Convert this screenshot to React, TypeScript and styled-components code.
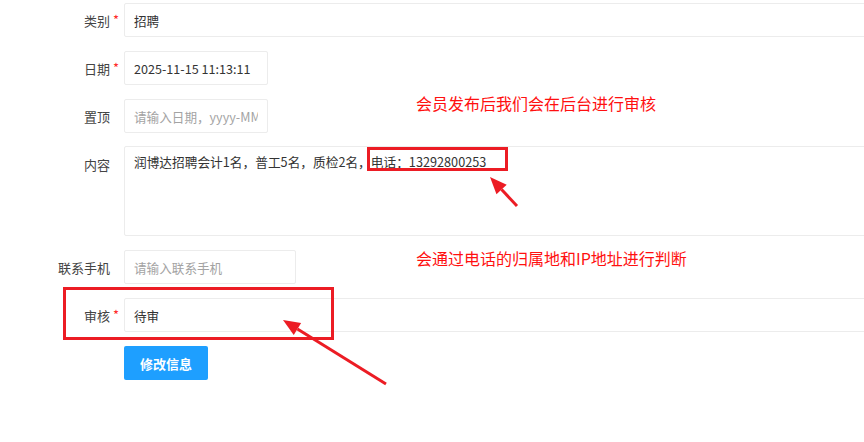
import React from "react";
import styled, { createGlobalStyle } from "styled-components";

const GlobalStyle = createGlobalStyle`
    html, body {
        margin: 0;
        padding: 0;
        background: #fff;
        overflow: hidden;
    }
    body {
        font-family: "Noto Sans CJK SC", "Noto Sans", "Liberation Sans", sans-serif;
        font-size: 13px;
        color: #333;
    }
`;

const Page = styled.div`
    position: relative;
    width: 864px;
    height: 442px;
    overflow: hidden;
`;

const Form = styled.form`
    display: flex;
    flex-direction: column;
    gap: 14px;
    padding-top: 3px;
`;

const Row = styled.div<{ $top?: boolean }>`
    display: flex;
    align-items: ${(p) => (p.$top ? "flex-start" : "center")};
`;

const LabelCell = styled.label`
    display: flex;
    width: 124px;
    flex-shrink: 0;
    height: 34px;
    align-items: center;
`;

const LabelText = styled.span`
    flex: 1;
    text-align: right;
    color: #444;
    font-size: 13px;
`;

const Star = styled.span`
    width: 14px;
    padding-left: 3px;
    box-sizing: border-box;
    align-self: flex-start;
    margin-top: 10px;
    color: #ff2a2a;
    font-size: 13px;
    line-height: 1;
`;

const Input = styled.input<{ $width: number }>`
    box-sizing: border-box;
    width: ${(p) => p.$width}px;
    height: 34px;
    flex-shrink: 0;
    padding: 0 9px;
    border: 1px solid #ececec;
    border-radius: 2px;
    outline: none;
    font-family: inherit;
    font-size: 12.6px;
    color: #333;
    background: #fff;
    &::placeholder {
        color: #a3a3a3;
    }
`;

const TextArea = styled.textarea`
    box-sizing: border-box;
    width: 760px;
    height: 90px;
    flex-shrink: 0;
    margin-top: -1px;
    padding: 5px 9px;
    border: 1px solid #ececec;
    border-radius: 2px;
    outline: none;
    resize: none;
    font-family: inherit;
    font-size: 12.7px;
    line-height: 20px;
    color: #333;
`;

const ButtonRow = styled.div`
    padding-left: 124px;
`;

const SubmitButton = styled.button`
    width: 84px;
    height: 34px;
    border: none;
    border-radius: 2px;
    background: #1e9fff;
    color: #fff;
    font-family: inherit;
    font-size: 13px;
    font-weight: 700;
    cursor: pointer;
`;

const Note = styled.div<{ $x: number; $y: number }>`
    position: absolute;
    left: ${(p) => p.$x}px;
    top: ${(p) => p.$y}px;
    color: #ff1010;
    font-size: 16px;
    line-height: 20px;
    white-space: nowrap;
`;

const Overlay = styled.svg`
    position: absolute;
    left: 0;
    top: 0;
    pointer-events: none;
`;

const RED = "#ec1c24";

function Arrow({ x1, y1, x2, y2 }: { x1: number; y1: number; x2: number; y2: number }) {
    const a = Math.atan2(y2 - y1, x2 - x1);
    const len = 17;
    const w = 7;
    const bx = x2 - Math.cos(a) * len;
    const by = y2 - Math.sin(a) * len;
    const px = -Math.sin(a) * w;
    const py = Math.cos(a) * w;
    return (
        <g>
            <line x1={x1} y1={y1} x2={bx} y2={by} stroke={RED} strokeWidth={3} />
            <polygon
                points={`${x2},${y2} ${bx + px},${by + py} ${bx - px},${by - py}`}
                fill={RED}
            />
        </g>
    );
}

export default function App() {
    return (
        <Page>
            <GlobalStyle />
            <Form onSubmit={(e) => e.preventDefault()}>
                <Row>
                    <LabelCell>
                        <LabelText>类别</LabelText>
                        <Star>*</Star>
                    </LabelCell>
                    <Input $width={760} defaultValue="招聘" />
                </Row>
                <Row>
                    <LabelCell>
                        <LabelText>日期</LabelText>
                        <Star>*</Star>
                    </LabelCell>
                    <Input $width={144} defaultValue="2025-11-15 11:13:11" />
                </Row>
                <Row>
                    <LabelCell>
                        <LabelText>置顶</LabelText>
                        <Star />
                    </LabelCell>
                    <Input $width={144} placeholder="请输入日期，yyyy-MM-dd" />
                </Row>
                <Row $top>
                    <LabelCell>
                        <LabelText>内容</LabelText>
                        <Star />
                    </LabelCell>
                    <TextArea defaultValue="润博达招聘会计1名，普工5名，质检2名，电话：13292800253" />
                </Row>
                <Row>
                    <LabelCell>
                        <LabelText>联系手机</LabelText>
                        <Star />
                    </LabelCell>
                    <Input $width={172} placeholder="请输入联系手机" />
                </Row>
                <Row>
                    <LabelCell>
                        <LabelText>审核</LabelText>
                        <Star>*</Star>
                    </LabelCell>
                    <Input $width={760} defaultValue="待审" />
                </Row>
                <ButtonRow>
                    <SubmitButton type="submit">修改信息</SubmitButton>
                </ButtonRow>
            </Form>

            <Note $x={416} $y={93}>会员发布后我们会在后台进行审核</Note>
            <Note $x={416} $y={248}>会通过电话的归属地和IP地址进行判断</Note>

            <Overlay width={864} height={442}>
                <rect x={368.5} y={148.5} width={138} height={21} fill="none" stroke={RED} strokeWidth={3} />
                <rect x={64.5} y={288.5} width={268} height={50} fill="none" stroke={RED} strokeWidth={3} />
                <Arrow x1={517} y1={206} x2={490} y2={177} />
                <Arrow x1={386} y1={384} x2={283} y2={320} />
            </Overlay>
        </Page>
    );
}
